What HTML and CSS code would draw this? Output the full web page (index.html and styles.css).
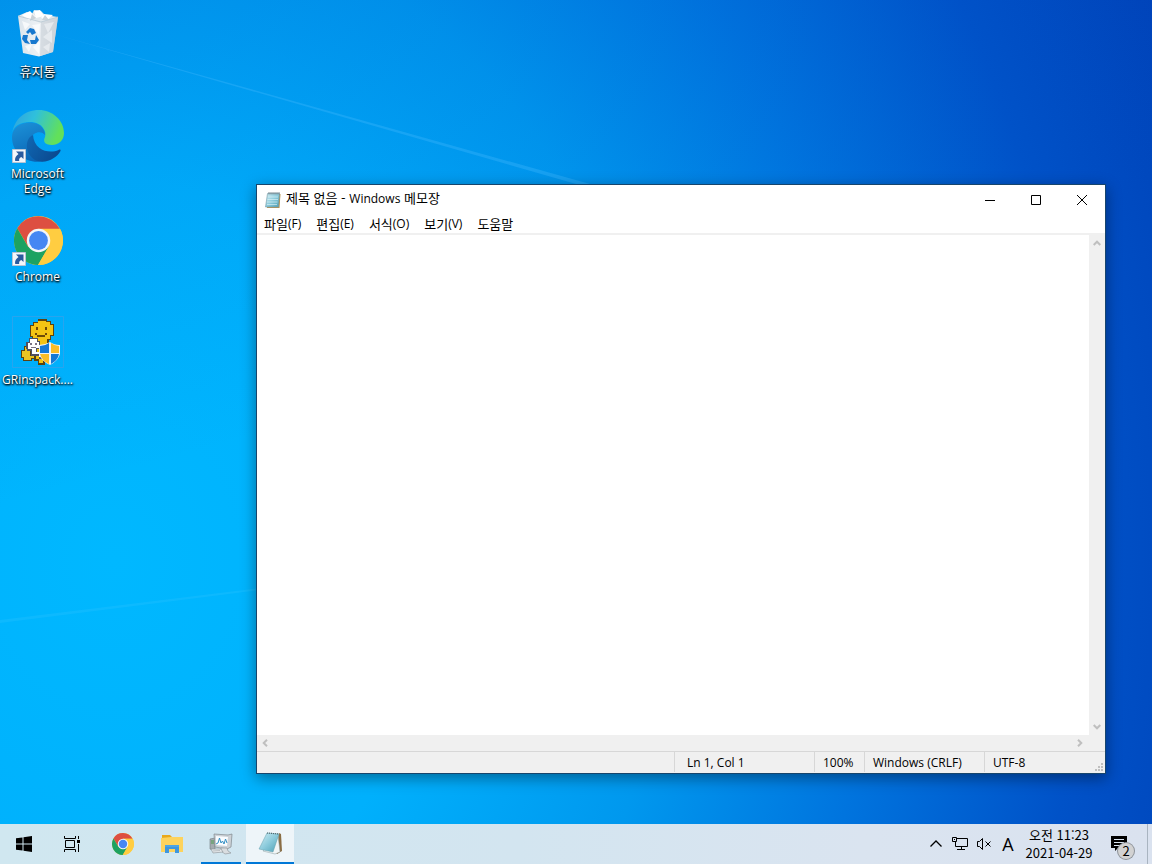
FILE: index.html
```html
<!DOCTYPE html>
<html lang="ko">
<head>
    <meta charset="UTF-8">
    <meta name="viewport" content="width=device-width, initial-scale=1.0">
    <title>제목 없음 - Windows 메모장</title>
    <link rel="stylesheet" href="styles.css">
</head>
<body>

    <!-- Shared gradients and symbols -->
    <svg class="defs" aria-hidden="true">
        <defs>
            <linearGradient id="edgeTop" x1="0" y1="0" x2="1" y2="0.3">
                <stop offset="0" stop-color="#2f9fe0"/>
                <stop offset="0.45" stop-color="#2fc0dc"/>
                <stop offset="1" stop-color="#62e05a"/>
            </linearGradient>
            <linearGradient id="edgeLeft" x1="0.3" y1="0" x2="0.6" y2="1">
                <stop offset="0" stop-color="#1b8fd6"/>
                <stop offset="1" stop-color="#0a64b4"/>
            </linearGradient>
            <linearGradient id="edgeBottom" x1="0" y1="0" x2="1" y2="0.6">
                <stop offset="0" stop-color="#1068b4"/>
                <stop offset="1" stop-color="#0b4a90"/>
            </linearGradient>
            <linearGradient id="paper" x1="0" y1="0" x2="1" y2="1">
                <stop offset="0" stop-color="#d4eef4"/>
                <stop offset="0.5" stop-color="#8ccbdc"/>
                <stop offset="1" stop-color="#4c9fb4"/>
            </linearGradient>
            <linearGradient id="bin" x1="0" y1="0" x2="1" y2="0">
                <stop offset="0" stop-color="#dce5ec"/>
                <stop offset="0.55" stop-color="#eef2f5"/>
                <stop offset="1" stop-color="#c6ccd2"/>
            </linearGradient>
        </defs>
        <symbol id="chrome" viewBox="0 0 48 48">
            <circle cx="24" cy="24" r="24" fill="#ffcd41"/>
            <path d="M3.2 12A24 24 0 0 1 44.8 12.500H24L14 30Z" fill="#dd4f41"/>
            <path d="M3.200 12A24 24 0 0 0 23.500 48L34.300 29.500L24 34L13.800 30Z" fill="#1da261"/>
            <path d="M24 12.800H45.200A24 24 0 0 1 23.500 48L34 30Z" fill="#ffcd41"/>
            <circle cx="24" cy="24" r="11.500" fill="#f4f6f8"/>
            <circle cx="24" cy="24" r="9.200" fill="#4587f3"/>
        </symbol>
        <symbol id="shortcut" viewBox="0 0 14 14">
            <path d="M.5.5h13v13H.5z" fill="#f4f6fa" stroke="#b8c4d4"/>
            <path d="M4 2.500H11.500V10L9.300 7.900C7.200 9 6.900 10 7.200 12H3.200C2.500 9 4 6.800 6.500 5Z" fill="#2a5a9e"/>
        </symbol>
    </svg>

    <div class="desktop">
        <svg class="wallpaper" viewBox="0 0 1152 824" preserveAspectRatio="none" aria-hidden="true">
            <path d="M50 33L590 184H576Z" fill="#4cbcff" opacity="0.3"/>
            <path d="M0 620L300 583V585L0 623Z" fill="#58d0ff" opacity="0.15"/>
        </svg>

        <nav class="shortcuts">
            <button class="shortcut" type="button">
                <svg class="shortcut-icon" viewBox="0 0 52 52">
                    <path d="M6 9L11 46L27 49.500L41 45L46 10L29 14Z" fill="url(#bin)"/>
                    <path d="M6 9L15 5L20 7L22 3L29 4L33 8L46 10L29 16Z" fill="#e2e8ec"/>
                    <path d="M10 8L18 4L24 10L17 13ZM22 4L28 3L32 9L24 11ZM32 7L41 8L35 13L29 11Z" fill="#fff"/>
                    <path d="M20 7L24 11L18 14ZM33 8L30 13L37 13Z" fill="#cbd2d8"/>
                    <path d="M29 15L28 49L41 45L46 10Z" fill="#cfd6dc" opacity="0.75"/>
                    <path d="M32 17L42 15L36 26ZM31 30L40 23L40 36ZM31 40L38 36L37 45Z" fill="#e6eaee"/>
                    <path d="M10 14L18 17L13 23ZM20 18L28 17L27 28ZM13 39L20 37L17 45ZM21 40L28 34L27 47Z" fill="#fff" opacity="0.7"/>
                    <path d="M6 9L29 15L46 10" fill="none" stroke="#b9c9d4" stroke-width="0.8"/>
                    <path d="M14 25L18 21L22 22L24 26L20 28L18 25L16 27ZM11 28L16 28L15 33L18 37L13 36L10 32ZM24 28L27 33L24 37L19 37L18 33L23 33Z" fill="#1878ce"/>
                </svg>
                <span class="shortcut-label">휴지통</span>
            </button>
            <button class="shortcut" type="button">
                <svg class="shortcut-icon" viewBox="0 0 52 52">
                    <path d="M0 26C0 14 12 12 20 12C30 13 35 21 33 27C31 31 32 35 40 35C46 35 52 31 52 23C52 10 40 0 27 0C12 0 1 10 0 26Z" fill="url(#edgeTop)"/>
                    <path d="M0 27C0 17 10 12 19 12.500C28 13 33 19 33 25C31 22 26 21 22 24C12 31 18 46 32 51C16 55 0 44 0 27Z" fill="url(#edgeLeft)"/>
                    <path d="M21 25C13 28 12 43 23 50C33 55 45 48 48.500 41C49 40 48 39 46.500 40C38 44 22 41 21 25Z" fill="url(#edgeBottom)"/>
                    <use href="#shortcut" x="0" y="39" width="14" height="14"/>
                </svg>
                <span class="shortcut-label latin">Microsoft Edge</span>
            </button>
            <button class="shortcut" type="button">
                <svg class="shortcut-icon" viewBox="0 0 52 52">
                    <use href="#chrome" x="2" y="3" width="49" height="49"/>
                    <use href="#shortcut" x="0" y="39" width="14" height="14"/>
                </svg>
                <span class="shortcut-label latin">Chrome</span>
            </button>
            <button class="shortcut" type="button">
                <svg class="shortcut-icon" viewBox="0 0 52 52">
                    <path d="M.5.5h51v51H.5z" fill="none" stroke="#28a4ee"/>
                    <path d="M26 3H35V5H39V8H42V20H39V24H37V28H38V44H33V49H26V45H22V38H20V24H20V21H18V9H21V6H26Z" fill="#5c4210"/>
                    <path d="M26 5H34V6H38V9H41V19H38V23H35V27H37V43H31V47H27V43H23V25H25V22H21V20H19V10H22V7H26Z" fill="#f4c414"/>
                    <path d="M24 11H26V14H24ZM33 11H35V14H33ZM23 17H25V19H33V17H35V19H33V21H25V19H23Z" fill="#6e4a08"/>
                    <path d="M12 30H19V40H24V43H20V45H11V42H9V34H12Z" fill="#5c4210"/>
                    <path d="M13 31H18V40H22V42H19V44H12V41H10V35H13Z" fill="#e9c524"/>
                    <path d="M17 22H26V25H28V33H25V36H31V43H27V40H19V35H15V33H14V26H17Z" fill="#505060"/>
                    <path d="M18 23H25V26H27V32H24V36H29V41H27V38H20V33H16V27H18Z" fill="#fff"/>
                    <path d="M18 27H20V29H18ZM23 27H25V29H23ZM19 31H24V32H19Z" fill="#7c7484"/>
                    <path d="M27 29Q33 29 38 26Q42 29 48 29V38Q46 45 38 49Q29 45 27 38Z" fill="#f1f4f7"/>
                    <path d="M28 30Q33 30 37 27V37H28ZM39 38H47Q46 44 39 48Z" fill="#1678d6"/>
                    <path d="M39 27Q43 30 47 30V37H39ZM28 38H37V48Q30 45 28 38Z" fill="#fbbd28"/>
                </svg>
                <span class="shortcut-label latin">GRinspack....</span>
            </button>
        </nav>

        <main class="window">
            <header class="titlebar">
                <svg class="titlebar-icon" viewBox="0 0 16 16">
                    <path d="M3 2H15.500L14.500 16H2Z" fill="#b8904c"/>
                    <path d="M2.500 1.500H14.500L13.500 15H.5Z" fill="url(#paper)" stroke="#7599a4" stroke-width="0.6"/>
                    <path d="M3 5H13M2.500 7.500H13M2 10H12.500M2 12.500H12" stroke="#e4f5f8" stroke-width="0.6"/>
                    <path d="M4 0V2.500M6 0V2.500M8 0V2.500M10 0V2.500M12 0V2.500M14 0V2.500" stroke="#5a7078" stroke-width="0.8"/>
                </svg>
                <h1 class="titlebar-text">제목 없음 - <span class="latin">Windows</span> 메모장</h1>
                <button class="caption-button" type="button" aria-label="최소화">
                    <svg width="12" height="12" viewBox="0 0 12 12"><path d="M1 6.500H11" stroke="#000"/></svg>
                </button>
                <button class="caption-button" type="button" aria-label="최대화">
                    <svg width="12" height="12" viewBox="0 0 12 12"><path d="M1.500 1.500H10.500V10.500H1.500Z" fill="none" stroke="#000"/></svg>
                </button>
                <button class="caption-button" type="button" aria-label="닫기">
                    <svg width="12" height="12" viewBox="0 0 12 12"><path d="M1 1L11 11M11 1L1 11" stroke="#000"/></svg>
                </button>
            </header>

            <nav class="menubar">
                <button class="menu-item" type="button">파일<span class="latin">(F)</span></button>
                <button class="menu-item" type="button">편집<span class="latin">(E)</span></button>
                <button class="menu-item" type="button">서식<span class="latin">(O)</span></button>
                <button class="menu-item" type="button">보기<span class="latin">(V)</span></button>
                <button class="menu-item" type="button">도움말</button>
            </nav>

            <div class="editor">
                <textarea class="editor-text" aria-label="텍스트 편집기" spellcheck="false"></textarea>
                <div class="scrollbar scrollbar-vertical">
                    <button class="scroll-button" type="button" aria-label="위로">
                        <svg width="8" height="8" viewBox="0 0 8 8"><path d="M.7 6L4 2.700L7.300 6"/></svg>
                    </button>
                    <button class="scroll-button" type="button" aria-label="아래로">
                        <svg width="8" height="8" viewBox="0 0 8 8"><path d="M.7 2L4 5.300L7.300 2"/></svg>
                    </button>
                </div>
            </div>
            <div class="scrollbar scrollbar-horizontal">
                <button class="scroll-button" type="button" aria-label="왼쪽">
                    <svg width="8" height="8" viewBox="0 0 8 8"><path d="M6 .7L2.700 4L6 7.300"/></svg>
                </button>
                <button class="scroll-button" type="button" aria-label="오른쪽">
                    <svg width="8" height="8" viewBox="0 0 8 8"><path d="M2 .7L5.300 4L2 7.300"/></svg>
                </button>
            </div>

            <footer class="statusbar latin">
                <span class="status-cell status-position">Ln 1, Col 1</span>
                <span class="status-cell status-zoom">100%</span>
                <span class="status-cell status-eol">Windows (CRLF)</span>
                <span class="status-cell status-encoding">UTF-8</span>
                <svg class="grip" viewBox="0 0 8 8"><path d="M6 0h2v2H6zM3 3h2v2H3zM6 3h2v2H6zM0 6h2v2H0zM3 6h2v2H3zM6 6h2v2H6z"/></svg>
            </footer>
        </main>
    </div>

    <footer class="taskbar">
        <button class="task-button" type="button" aria-label="시작">
            <svg width="16" height="16" viewBox="0 0 16 16"><path d="M0 2.300L6.500 1.400V7.500H0ZM7.500 1.200L16 0V7.500H7.500ZM0 8.500H6.500V14.600L0 13.700ZM7.500 8.500H16V16L7.500 14.800Z"/></svg>
        </button>
        <button class="task-button" type="button" aria-label="작업 보기">
            <svg width="16" height="16" viewBox="0 0 16 16">
                <path d="M.5 0V2.500H11.500V0M1.500 4.500H10.500V11.500H1.500ZM.5 16V13.500H11.500V16M14.500 0V3M14.500 8V16" fill="none" stroke="#000"/>
                <path d="M13 4h3v3h-3z"/>
            </svg>
        </button>
        <div class="task-apps">
            <button class="task-button" type="button" aria-label="Chrome">
                <svg width="22" height="22"><use href="#chrome"/></svg>
            </button>
            <button class="task-button" type="button" aria-label="파일 탐색기">
                <svg width="22" height="20" viewBox="0 0 22 20">
                    <path d="M1 1H9L11 3H21V18H1Z" fill="#e9a91c"/>
                    <path d="M0 4L10 3H22V18H0Z" fill="#fdd35c"/>
                    <path d="M4 19V11H18V19H14V15H8V19Z" fill="#3e96dc"/>
                    <path d="M4 11H18V13H4Z" fill="#4ba4e4"/>
                </svg>
            </button>
            <button class="task-button task-running" type="button" aria-label="모니터">
                <svg width="24" height="22" viewBox="0 0 24 22">
                    <path d="M1 6L6 5V18L1 16Z" fill="#a4abb0" stroke="#70787e" stroke-width="0.6"/>
                    <path d="M2 8H5M2 10H5" stroke="#4f9c50"/>
                    <path d="M5 1L19 2L23 1L22 14L18 16L6 14Z" fill="#cdd2d7" stroke="#80888e" stroke-width="0.7"/>
                    <path d="M7 3L19 4L18 13L7 12Z" fill="#f9fcff"/>
                    <path d="M7 11L9 10L10.500 5L12 10L13.500 8L15 11L16.500 6L18 10" fill="none" stroke="#338fc4"/>
                    <path d="M12 15H18L19 18L22 20L16 21L12 18Z" fill="#d9dde0" stroke="#8b9196" stroke-width="0.6"/>
                    <path d="M2 16L12 16L14 19L4 20Z" fill="#e6e9eb" stroke="#888f94" stroke-width="0.6"/>
                    <path d="M4 18L11 17.500" stroke="#9ba1a6" stroke-width="0.6"/>
                </svg>
            </button>
            <button class="task-button task-active" type="button" aria-label="메모장">
                <svg width="24" height="24" viewBox="0 0 24 24">
                    <path d="M21 2L23 3L24 20L19 23L17 20Z" fill="#8a6d44"/>
                    <path d="M20 4L22 21L17 23L5 20Z" fill="#f2f5f5" stroke="#879ba0" stroke-width="0.5"/>
                    <path d="M9 2L21 3L15 21L1 18Z" fill="url(#paper)" stroke="#639eac" stroke-width="0.5"/>
                    <path d="M9 2L21 3" stroke="#52666c" stroke-width="1.200" stroke-dasharray="1 1"/>
                </svg>
            </button>
        </div>

        <div class="tray">
            <button class="tray-button" type="button" aria-label="숨겨진 아이콘 표시">
                <svg width="12" height="12" viewBox="0 0 12 12"><path d="M0.500 8.500L6 3L11.500 8.500" fill="none" stroke="#000" stroke-width="1.300"/></svg>
            </button>
            <button class="tray-button" type="button" aria-label="네트워크">
                <svg width="16" height="14" viewBox="0 0 16 14">
                    <path d="M5 1.500H15.500V9.500H3.500V5M9.500 9.500V12.500M5 12.500H13M.5.500H4.500V4.500H.5Z" fill="none" stroke="#000"/>
                    <path d="M2 2h1v1H2z"/>
                </svg>
            </button>
            <button class="tray-button" type="button" aria-label="음소거">
                <svg width="16" height="14" viewBox="0 0 16 14"><path d="M1.500 4.500H3.500L6.500 1.500V12.500L3.500 9.500H1.500ZM9.500 4.500L14.500 9.500M14.500 4.500L9.500 9.500" fill="none" stroke="#000"/></svg>
            </button>
            <button class="tray-button tray-ime" type="button">A</button>
            <button class="clock" type="button"><span>오전 11:23</span><span>2021-04-29</span></button>
            <button class="notifications" type="button" aria-label="알림 센터">
                <svg width="16" height="16" viewBox="0 0 16 16">
                    <path d="M0 0H16V12H7L4 15V12H0Z"/>
                    <path d="M3 3.500H13M3 6.500H13M3 9.500H10" stroke="#dce6f2"/>
                </svg>
                <span class="badge">2</span>
            </button>
            <button class="show-desktop" type="button" aria-label="바탕 화면 보기"></button>
        </div>
    </footer>

</body>
</html>
```
FILE: styles.css
```css
* {
    box-sizing: border-box;
}

body {
    display: flex;
    flex-direction: column;
    height: 100vh;
    margin: 0;
    overflow: hidden;
    font-family: "Noto Sans CJK KR", sans-serif;
    font-size: 13px;
    line-height: 16px;
    color: #000;
}

button {
    display: flex;
    align-items: center;
    justify-content: center;
    margin: 0;
    padding: 0;
    border: none;
    background: none;
    color: inherit;
    font: inherit;
}

.defs {
    position: absolute;
    width: 0;
    height: 0;
}

.latin {
    font-family: "Open Sans", "Noto Sans CJK KR", sans-serif;
    font-size: 12px;
}

/* Desktop */
.desktop {
    position: relative;
    flex: 1;
    background:
        linear-gradient(165deg, rgba(0, 80, 200, 0.16) 0%, rgba(0, 90, 210, 0) 45%),
        radial-gradient(ellipse 100% 165% at 10% 68%, #00b8ff 0%, #00b0fc 28%, #0098ee 48%, #0074de 66%, #0052c8 84%, #0042b8 100%);
}

.wallpaper {
    position: absolute;
    width: 100%;
    height: 100%;
}

.shortcuts {
    position: relative;
    display: flex;
    flex-direction: column;
    width: 75px;
    padding-top: 7px;
}

.shortcut {
    flex-direction: column;
    justify-content: flex-start;
    gap: 4px;
    height: 103px;
    color: #fff;
    line-height: 15px;
    text-shadow: 0 1px 2px #000, 1px 1px 2px #000;
}

.shortcut-icon {
    flex: none;
    width: 52px;
    height: 52px;
    overflow: visible;
}

/* Notepad window */
.window {
    position: absolute;
    top: 184px;
    right: 46px;
    bottom: 50px;
    left: 256px;
    display: flex;
    flex-direction: column;
    border: 1px solid #17456c;
    background: #fff;
    box-shadow: 0 4px 14px rgba(0, 0, 0, 0.4);
}

.titlebar {
    display: flex;
    align-items: stretch;
    height: 29px;
    padding-left: 8px;
}

.titlebar-icon {
    align-self: center;
    width: 16px;
    height: 16px;
}

.titlebar-text {
    flex: 1;
    align-self: center;
    margin: 0;
    padding: 0 0 2px 5px;
    font-size: 13px;
    font-weight: normal;
}

.caption-button {
    width: 46px;
}

.menubar {
    display: flex;
    gap: 1px;
    height: 21px;
    border-bottom: 2px solid #f0f0f0;
}

.menu-item {
    padding: 0 7px;
}

.editor {
    display: flex;
    flex: 1;
}

.editor-text {
    flex: 1;
    padding: 2px 4px;
    border: none;
    outline: none;
    resize: none;
    font: inherit;
}

.scrollbar {
    display: flex;
    justify-content: space-between;
    background: #f0f0f0;
}

.scrollbar-vertical {
    flex-direction: column;
    width: 16px;
}

.scrollbar-horizontal {
    height: 16px;
    padding-right: 17px;
}

.scroll-button {
    width: 16px;
    height: 16px;
}

.scroll-button path {
    fill: none;
    stroke: #bfbfbf;
    stroke-width: 2;
}

.statusbar {
    position: relative;
    display: flex;
    justify-content: flex-end;
    height: 22px;
    border-top: 1px solid #d7d7d7;
    background: #f0f0f0;
}

.status-cell {
    height: 20px;
    padding-left: 8px;
    border-left: 1px solid #d7d7d7;
    line-height: 22px;
}

.status-position {
    width: 140px;
    padding-left: 12px;
}

.status-zoom {
    width: 50px;
}

.status-eol {
    width: 120px;
}

.status-encoding {
    width: 121px;
}

.grip {
    position: absolute;
    right: 2px;
    bottom: 2px;
    width: 8px;
    height: 8px;
    fill: #bfbfbf;
}

/* Taskbar */
.taskbar {
    display: flex;
    height: 40px;
    background: linear-gradient(90deg, #d0e7f0, #d3e5f0 45%, #dae4f0 75%, #dae2ef);
}

.task-button {
    width: 48px;
    height: 40px;
}

.task-apps {
    display: flex;
    gap: 1px;
    margin-left: 3px;
}

.task-running {
    background: linear-gradient(#0078d7, #0078d7) bottom / 40px 2px no-repeat;
}

.task-active {
    border-bottom: 2px solid #0078d7;
    background: #eef5f9;
}

.tray {
    display: flex;
    margin-left: auto;
}

.tray-button {
    width: 24px;
}

.tray-ime {
    font-family: "Open Sans", sans-serif;
    font-size: 18px;
}

.clock {
    flex-direction: column;
    width: 78px;
    line-height: 18px;
}

.notifications {
    position: relative;
    width: 49px;
    padding-right: 8px;
}

.badge {
    position: absolute;
    right: 13px;
    bottom: 5px;
    width: 16px;
    height: 16px;
    border-radius: 50%;
    background: #d2d2d2;
    box-shadow: 0 0 0 1px #8d9298;
    line-height: 16px;
}

.show-desktop {
    width: 5px;
    border-left: 1px solid #a9b4c0;
}
```
